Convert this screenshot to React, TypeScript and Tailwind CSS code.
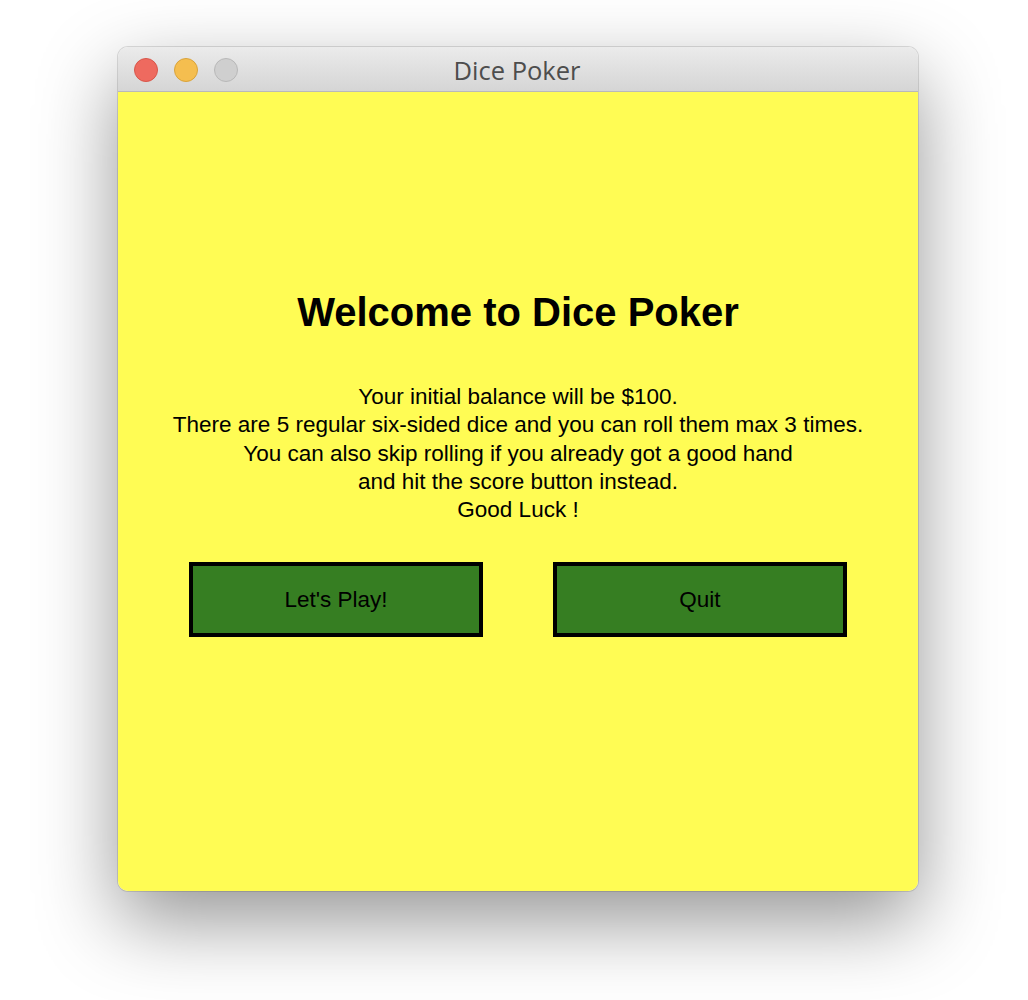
import React from 'react';

const lines = [
  'Your initial balance will be $100.',
  'There are 5 regular six-sided dice and you can roll them max 3 times.',
  'You can also skip rolling if you already got a good hand',
  'and hit the score button instead.',
  'Good Luck !',
];

export default function App() {
  return (
    <div className="min-h-[1000px] bg-white pt-[47px] pl-[118px] font-['Liberation_Sans',Arial,sans-serif]">
      <div className="w-[800px] rounded-[10px] overflow-hidden shadow-[0_30px_80px_rgba(0,0,0,0.42),0_0_0_1px_rgba(0,0,0,0.12)]">
        {/* Title bar */}
        <div className="relative h-[45px] flex items-center justify-center bg-gradient-to-b from-[#ebebeb] to-[#d5d5d5] border-b border-[#b9b9b9]">
          <div className="absolute left-[16px] top-[11px] flex gap-[16px]">
            <span className="w-[24px] h-[24px] rounded-full bg-[#ee6a5f] border border-[#d8564a]" />
            <span className="w-[24px] h-[24px] rounded-full bg-[#f5be4f] border border-[#d9a33b]" />
            <span className="w-[24px] h-[24px] rounded-full bg-[#cfcfcf] border border-[#b8b8b8]" />
          </div>
          <span className="text-[25.5px] leading-[30px] text-[#4d4d4d] font-['Open_Sans',sans-serif] -ml-[2px] mt-[1px]">Dice Poker</span>
        </div>

        {/* Content */}
        <div className="h-[799px] bg-[#fffc54] flex flex-col items-center pt-[200px]">
          <h1 className="text-[40px] leading-[40px] font-bold text-black">Welcome to Dice Poker</h1>
          <div className="mt-[51px] text-center text-[22.5px] leading-[28.3px] text-black">
            {lines.map((l) => (
              <p key={l}>{l}</p>
            ))}
          </div>
          <div className="mt-[38px] flex gap-[70px]">
            <button className="w-[294px] h-[75px] bg-[#367e22] border-4 border-black text-[22.5px] text-black">Let's Play!</button>
            <button className="w-[294px] h-[75px] bg-[#367e22] border-4 border-black text-[22.5px] text-black">Quit</button>
          </div>
        </div>
      </div>
    </div>
  );
}
